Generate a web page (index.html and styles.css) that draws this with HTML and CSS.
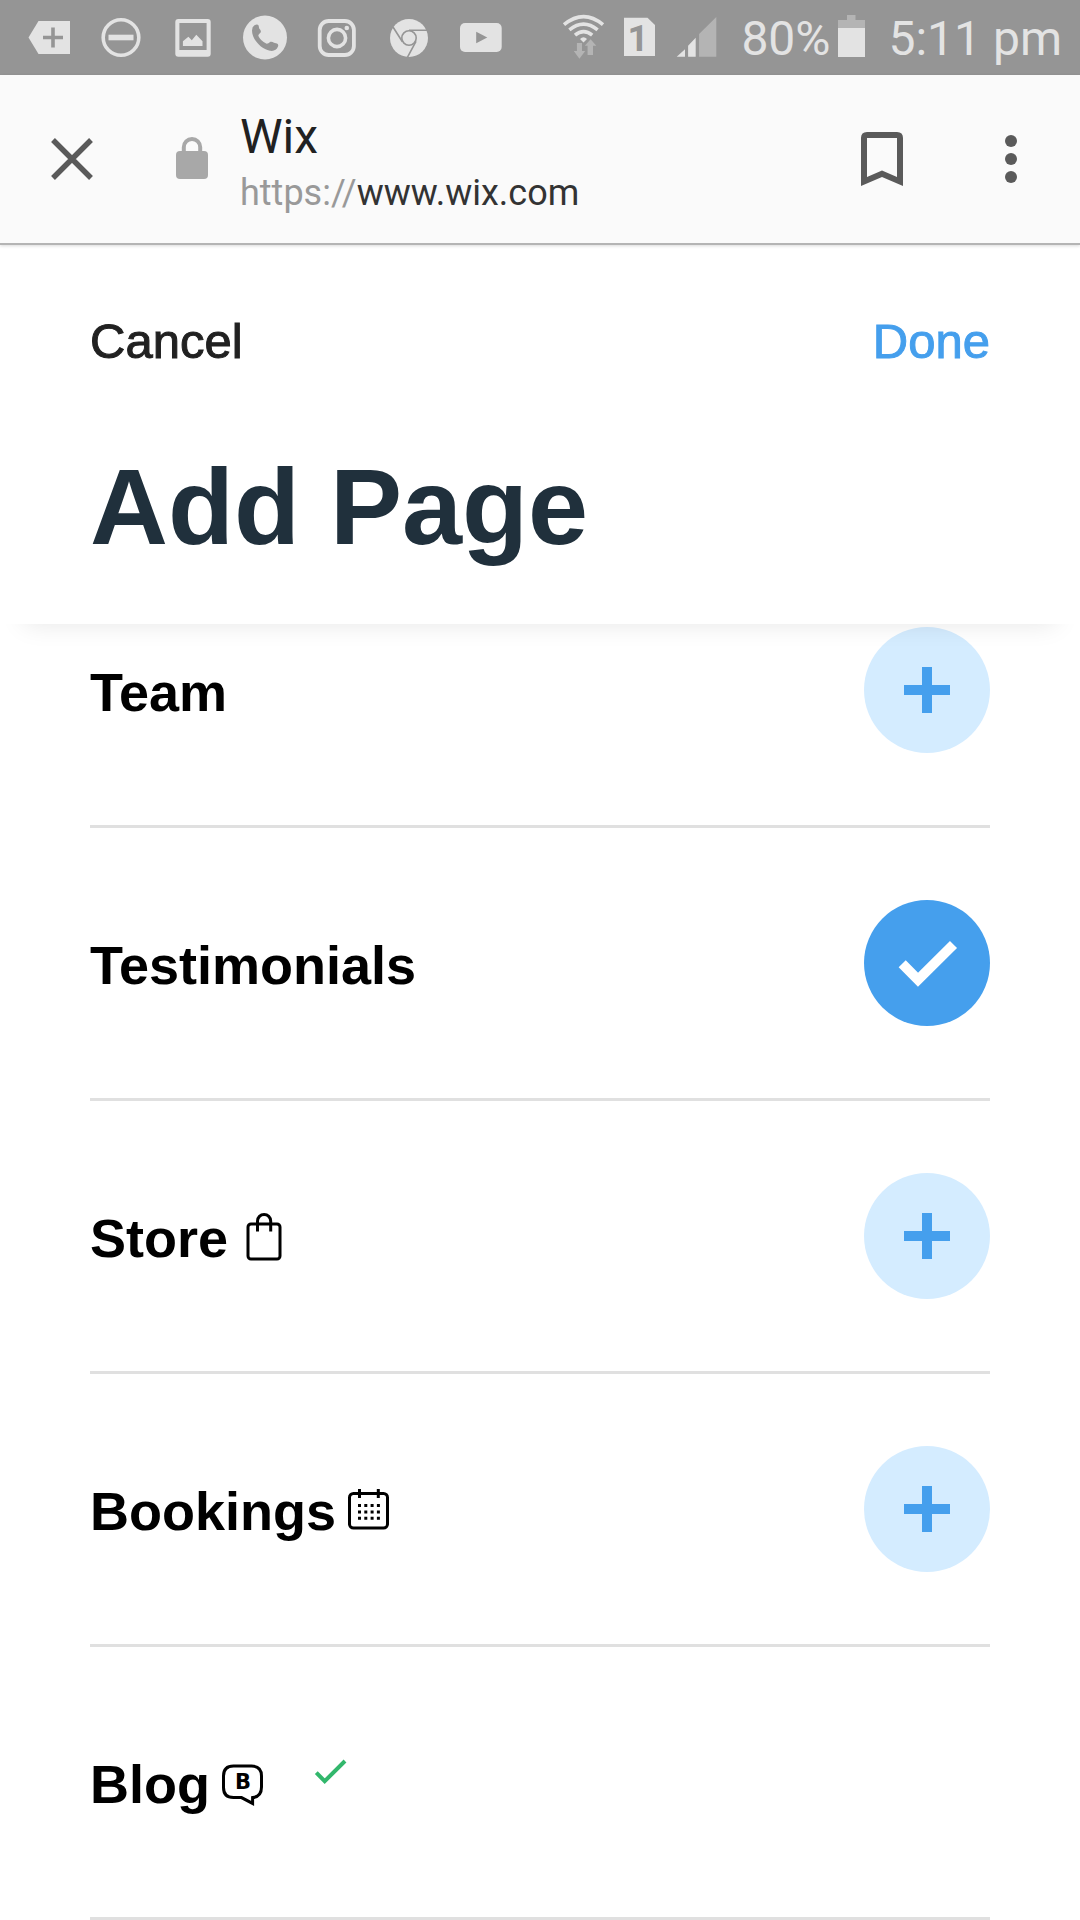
FILE: index.html
```
<!DOCTYPE html>
<html lang="en">
<head>
    <meta charset="UTF-8">
    <meta name="viewport" content="width=device-width, initial-scale=1.0">
    <title>Wix - Add Page</title>
    <link rel="stylesheet" href="styles.css">
</head>
<body>
<!-- Phone status bar -->
<div class="status-bar">
    <div class="status-left">
        <svg class="status-icon" viewBox="0 0 48 49">
            <path class="light" d="M3.5 24.5L13.5 8H45V41H13.5Z"/>
            <path class="cut-line" stroke-width="3.6" d="M18 24.5H38M28 14.5V34.5"/>
        </svg>
        <svg class="status-icon" viewBox="0 0 48 49">
            <circle class="light-line" cx="24" cy="24.5" r="17.8" stroke-width="3.6"/>
            <rect class="light" x="11.5" y="21.7" width="25" height="5.6"/>
        </svg>
        <svg class="status-icon" viewBox="0 0 48 49">
            <rect class="light" x="6.3" y="6" width="35.4" height="37.7" rx="3"/>
            <rect class="cut" x="10.4" y="10" width="27.2" height="27"/>
            <path class="light" d="M13.9 33V28.3L19.4 23.7L22.8 27.3L27.3 21.7L33.5 28.3V33Z"/>
        </svg>
        <svg class="status-icon" viewBox="0 0 48 49">
            <circle class="light" cx="24" cy="24.5" r="22"/>
            <path class="cut" d="M13.5 12.2Q16.6 10.6 17.6 12.6L18.2 15.6Q20.6 18 19.6 19.4Q17 21.4 17.4 23Q19.6 27.8 25.2 30.6Q27 31 29.4 28.8Q31 28.2 33 29.8L36 30.6Q37.8 31.6 37 33.6C35.6 37.4 33 38.2 29 37.8C19.4 36 11 26 11 17.4Q11 13.6 13.5 12.2Z"/>
        </svg>
        <svg class="status-icon" viewBox="0 0 48 49">
            <rect class="light-line" x="6.7" y="8" width="34.2" height="34" rx="9" stroke-width="3.8"/>
            <circle class="light-line" cx="24" cy="25" r="8.6" stroke-width="3.6"/>
            <circle class="light" cx="33.8" cy="15" r="2.3"/>
        </svg>
        <svg class="status-icon" viewBox="0 0 48 49">
            <circle class="light" cx="24" cy="25" r="19"/>
            <circle class="cut-line" cx="24" cy="25" r="7.2" stroke-width="1.6"/>
            <path class="cut-line" stroke-width="1.6" d="M24 17.2H43M8 14L17.4 28.8M31 28.4L22.4 44.4"/>
        </svg>
        <svg class="status-icon" viewBox="0 0 48 49">
            <rect class="light" x="3" y="10" width="41.7" height="29" rx="5"/>
            <path class="cut" d="M19.2 18.7L30.3 24.5L19.2 30.3Z"/>
        </svg>
    </div>
    <div class="status-right">
        <svg class="status-icon" viewBox="0 0 48 49">
            <path class="light-line" stroke-width="3.6" d="M5 11.6Q24.6-4.4 44 11.6M10.4 16.8Q24.6 5.4 38.6 16.8M16 22.2Q24.6 15 33.2 22.2"/>
            <path class="light" d="M21 25.9Q24.5 22.5 28 25.9L24.5 29.5Z"/>
            <path class="faint" d="M17.9 30H23V38H26.2L20.4 45.7L14.8 38H17.9ZM28.6 42V32.7H25.8L31.6 26.3L37.3 32.7H34V42Z"/>
        </svg>
        <svg class="status-icon" viewBox="0 0 48 49">
            <path class="light" d="M9 4.7H32.5L40 12V43H9Z"/>
            <text class="sim-number" x="23" y="38">1</text>
        </svg>
        <svg class="status-icon" viewBox="0 0 48 49">
            <path class="light" d="M5.7 43.7L14 36.3V43.7ZM17.1 43.7V32.7L24.7 24.7V43.7Z"/>
            <path class="faint" d="M28.1 43.7V21L45.3 4V43.7Z"/>
        </svg>
        <span class="status-text">80%</span>
        <svg class="battery" viewBox="0 0 28 49">
            <path class="faint" d="M0 15V7H9V2H17.5V7H27V15Z"/>
            <rect class="light" x="0" y="15" width="27" height="29"/>
        </svg>
        <span class="status-text">5:11 pm</span>
    </div>
</div>

<!-- Browser toolbar -->
<div class="toolbar">
    <button class="icon-btn" aria-label="Close">
        <svg viewBox="0 0 72 72"><path class="tool-line" stroke-width="5.4" d="M17 17L55 55M55 17L17 55"/></svg>
    </button>
    <svg class="lock" viewBox="0 0 48 48">
        <rect x="8" y="16" width="32" height="28" rx="4"/>
        <path class="lock-bar" d="M15.8 17V12.2A8.2 8.2 0 0 1 32.2 12.2V17"/>
    </svg>
    <div class="site">
        <div class="site-title">Wix</div>
        <div class="site-url">https://<span>www.wix.com</span></div>
    </div>
    <button class="icon-btn" aria-label="Bookmark">
        <svg viewBox="0 0 72 72"><path class="tool-fill" fill-rule="evenodd" d="M21 9H51Q57 9 57 15V63L36 54L15 63V15Q15 9 21 9ZM21 15V54L36 47.5L51 54V15Z"/></svg>
    </button>
    <button class="icon-btn" aria-label="Menu">
        <svg viewBox="0 0 72 72">
            <circle class="tool-fill" cx="36" cy="18" r="6"/>
            <circle class="tool-fill" cx="36" cy="36" r="6"/>
            <circle class="tool-fill" cx="36" cy="54" r="6"/>
        </svg>
    </button>
</div>

<header class="page-header">
    <div class="header-actions">
        <button class="text-btn">Cancel</button>
        <button class="text-btn done">Done</button>
    </div>
    <h1>Add Page</h1>
</header>

<!-- Page types -->
<ul class="page-list">
    <li class="page-row">
        <span class="page-name">Team</span>
        <button class="round-btn" aria-label="Add Team">
            <svg viewBox="0 0 126 126"><path d="M40 63H86M63 40V86"/></svg>
        </button>
    </li>
    <li class="page-row">
        <span class="page-name">Testimonials</span>
        <button class="round-btn added" aria-label="Testimonials added">
            <svg viewBox="0 0 126 126"><path d="M38.2 63.8L54 79.7L89.5 44.5"/></svg>
        </button>
    </li>
    <li class="page-row">
        <span class="page-name">Store</span>
        <svg class="page-icon" viewBox="0 0 54 54">
            <rect x="14" y="15" width="32" height="35" rx="3"/>
            <path d="M23.5 22.5V12A6.6 6.6 0 0 1 36.7 12V22.5"/>
        </svg>
        <button class="round-btn" aria-label="Add Store">
            <svg viewBox="0 0 126 126"><path d="M40 63H86M63 40V86"/></svg>
        </button>
    </li>
    <li class="page-row">
        <span class="page-name">Bookings</span>
        <svg class="page-icon" viewBox="0 0 54 54">
            <rect x="7.5" y="11.5" width="38" height="34.5" rx="4"/>
            <path d="M17.5 7V16M36.3 7V16"/>
            <path d="M16 23.5H38M16 30H38M16 36.3H38" stroke-dasharray="3 3.3"/>
        </svg>
        <button class="round-btn" aria-label="Add Bookings">
            <svg viewBox="0 0 126 126"><path d="M40 63H86M63 40V86"/></svg>
        </button>
    </li>
    <li class="page-row">
        <span class="page-name">Blog</span>
        <svg class="page-icon" viewBox="0 0 54 54">
            <path d="M17.5 11H35.5Q45.5 11 45.5 21V32Q45.5 41.6 36.6 42.6V48.4L25.5 42.6H17.5Q7.5 42.6 7.5 32.6V21Q7.5 11 17.5 11Z"/>
            <text class="blog-letter" x="27" y="34">B</text>
        </svg>
        <svg class="tick" viewBox="0 0 36 54"><path d="M4.3 17.7L12.7 26.2L33 6"/></svg>
    </li>
</ul>
</body>
</html>
```
FILE: styles.css
```
* {
    box-sizing: border-box;
    margin: 0;
    padding: 0;
}

body {
    font-family: "Liberation Sans", Arial, sans-serif;
    background: #fff;
    color: #000;
}

button {
    border: none;
    background: none;
    font-family: inherit;
    cursor: pointer;
}

svg {
    display: block;
    flex-shrink: 0;
}

/* Status bar */
.status-bar {
    display: flex;
    justify-content: space-between;
    align-items: center;
    height: 75px;
    padding: 0 18px 0 25px;
    background: #959595;
    font-family: Roboto, sans-serif;
}

.status-left {
    display: flex;
    gap: 24px;
}

.status-right {
    display: flex;
    align-items: center;
    gap: 8px;
}

.status-icon {
    width: 48px;
    height: 49px;
}

.battery {
    width: 28px;
    height: 49px;
}

.status-text {
    margin-left: 14px;
    padding-top: 2px;
    font-size: 48px;
    line-height: 56px;
    color: #e3e3e3;
    white-space: nowrap;
}

.light {
    fill: #e3e3e3;
}

.faint {
    fill: #b4b4b4;
}

.cut {
    fill: #959595;
}

.light-line {
    fill: none;
    stroke: #e3e3e3;
}

.cut-line {
    fill: none;
    stroke: #959595;
}

.sim-number {
    fill: #959595;
    font-size: 37px;
    font-weight: 700;
    text-anchor: middle;
}

/* Browser toolbar */
.toolbar {
    display: flex;
    align-items: center;
    height: 170px;
    padding: 0 33px 0 36px;
    background: #fafafa;
    border-bottom: 2px solid #b4b4b4;
    box-shadow: 0 1px 3px rgba(0, 0, 0, 0.15);
    font-family: Roboto, sans-serif;
}

.icon-btn {
    width: 72px;
    height: 72px;
}

.icon-btn + .icon-btn {
    margin-left: 57px;
}

.tool-line {
    fill: none;
    stroke: #5a5a5a;
}

.tool-fill {
    fill: #5a5a5a;
}

.lock {
    width: 48px;
    height: 48px;
    margin: 0 24px 0 60px;
    fill: #a8a8a8;
}

.lock-bar {
    fill: none;
    stroke: #a8a8a8;
    stroke-width: 4;
}

.site {
    flex: 1;
    padding-top: 8px;
}

.site-title {
    font-size: 48px;
    line-height: 60px;
    color: #212121;
}

.site-url {
    font-size: 36px;
    line-height: 52px;
    color: #999;
}

.site-url span {
    color: #333;
}

/* Page header */
.page-header {
    position: relative;
    z-index: 1;
    padding: 66px 90px 57px;
    box-shadow: 0 24px 24px -24px rgba(0, 0, 0, 0.1);
}

.header-actions {
    display: flex;
    justify-content: space-between;
}

.text-btn {
    font-size: 49px;
    line-height: 60px;
    color: #212121;
    -webkit-text-stroke: 1px currentColor;
}

.done {
    color: #459fed;
}

h1 {
    margin-top: 76px;
    font-size: 108px;
    line-height: 120px;
    color: #20303c;
}

/* Page list */
.page-list {
    list-style: none;
    padding: 0 90px;
}

.page-row {
    display: flex;
    align-items: center;
    gap: 6px;
    min-height: 273px;
    padding: 72px 0;
    border-bottom: 3px solid #e0e0e0;
}

/* the top row is partly scrolled under the header */
.page-row:first-child {
    min-height: 0;
    padding-top: 3px;
}

.page-name {
    padding-top: 4px;
    font-size: 54px;
    line-height: 62px;
    font-weight: 700;
}

.page-icon {
    width: 54px;
    height: 54px;
    fill: none;
    stroke: #000;
    stroke-width: 3;
}

.blog-letter {
    fill: #000;
    stroke: none;
    font-family: "DejaVu Sans", sans-serif;
    font-size: 21px;
    font-weight: 700;
    text-anchor: middle;
}

.tick {
    width: 36px;
    height: 54px;
    margin-left: 36px;
    fill: none;
    stroke: #32b76c;
    stroke-width: 4;
}

.round-btn {
    width: 126px;
    height: 126px;
    margin-left: auto;
    border-radius: 50%;
    background: #d4ecff;
}

.round-btn path {
    fill: none;
    stroke: #459fed;
    stroke-width: 10;
}

.added {
    background: #459fed;
}

.added path {
    stroke: #fff;
}
```
